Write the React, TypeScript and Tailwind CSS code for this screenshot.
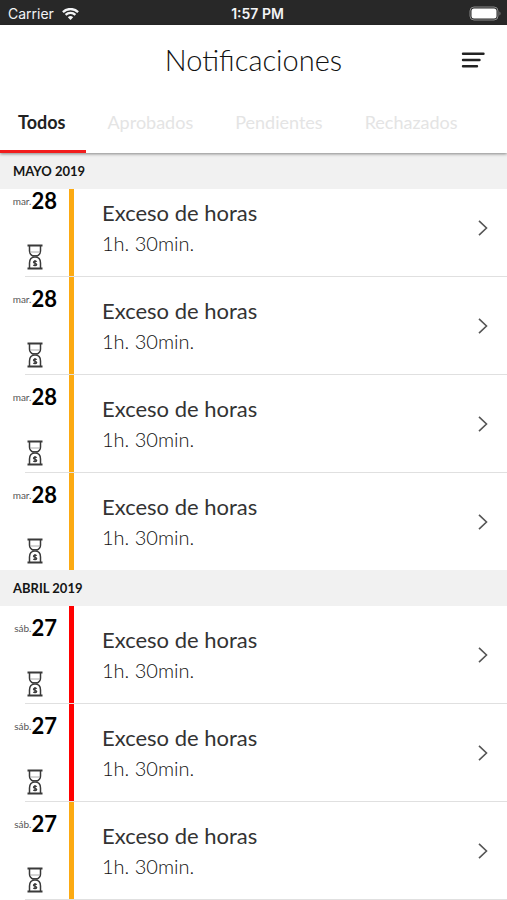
import React from "react";

type Status = "pending" | "rejected";

interface Entry {
  weekday: string;
  day: number;
  status: Status;
}

const tabs = ["Todos", "Aprobados", "Pendientes", "Rechazados"];

const may: Entry[] = [
  { weekday: "mar.", day: 28, status: "pending" },
  { weekday: "mar.", day: 28, status: "pending" },
  { weekday: "mar.", day: 28, status: "pending" },
  { weekday: "mar.", day: 28, status: "pending" },
];

const april: Entry[] = [
  { weekday: "sáb.", day: 27, status: "rejected" },
  { weekday: "sáb.", day: 27, status: "rejected" },
  { weekday: "sáb.", day: 27, status: "pending" },
];

const StatusBar = () => (
  <div className="grid h-[25px] grid-cols-3 items-center bg-[#282828] pt-[2px] pl-2 font-['Inter',sans-serif] text-[14px] text-gray-100">
    <div className="flex items-center gap-2">
      <span>Carrier</span>
      <svg className="h-3 w-[17px]" viewBox="0 0 17 12" fill="currentColor">
        <path d="M8.5 12 5.8 9.2a3.9 3.9 0 0 1 5.4 0Z" />
        <path
          d="M3.6 6.9a7 7 0 0 1 9.800 0M.9 4.100a10.900 10.900 0 0 1 15.200 0"
          fill="none"
          stroke="currentColor"
          strokeWidth="2.3"
        />
      </svg>
    </div>
    <span className="text-center font-semibold">1:57 PM</span>
    <svg
      className="mr-[6px] h-[15px] w-8 justify-self-end"
      viewBox="0 0 32 15"
      fill="none"
    >
      <rect x="1" y="1" width="28" height="13" rx="4" stroke="#8a8a8a" />
      <rect x="2.5" y="2.5" width="25" height="10" rx="2.5" fill="white" />
      <path d="M30.5 5.5v4c1.3-.6 1.3-3.4 0-4Z" fill="#8a8a8a" />
    </svg>
  </div>
);

const Hourglass = () => (
  <svg
    className="h-[26px] w-4"
    viewBox="0 0 16 26"
    fill="none"
    stroke="#3a3a3a"
    strokeWidth="1.5"
  >
    <path d="M.5 1.5h15M.5 24.5h15" strokeWidth="1.8" />
    <path d="M2.5 1.5v5.5c0 2.6 1.5 4.2 4 5.3M13.5 1.5v5.5c0 2.6-1.5 4.2-4 5.3" />
    <path d="M2.5 24.5v-5.500c0-3.700 2-6 5.500-6s5.500 2.300 5.500 6v5.500" />
    <path d="M3 8h10" stroke="#aaa" strokeWidth="1" />
    <path d="M6 11.8h4" />
    <path
      d="M9.8 17.6c-.5-.6-3.3-.8-3.3.6s3.2.9 3.2 2.3-2.7 1.2-3.4.5M8 16.1v6.2"
      strokeWidth="1.3"
    />
  </svg>
);

const Row = ({ weekday, day, status }: Entry) => (
  <li className="bg-white">
    <a href="#detalle" className="flex h-[97px]">
      <div className="flex w-[69px] shrink-0 flex-col justify-between pt-[10px] pb-[6px]">
        <div className="flex items-center justify-end pr-3">
          <span className="text-[10px] leading-6 text-[#555]">{weekday}</span>
          <span className="text-[22px] leading-6 font-bold text-black">
            {day}
          </span>
        </div>
        <div className="flex justify-center">
          <Hourglass />
        </div>
      </div>
      <div
        className={`w-[5px] shrink-0 ${
          status === "rejected" ? "bg-[#ff0000]" : "bg-[#fcaa12]"
        }`}
      />
      <div className="flex grow flex-col pt-[18px] pl-7 leading-[31px]">
        <span className="text-[22px] text-[#333]">Exceso de horas</span>
        <span className="text-[20px] font-light text-[#111]">1h. 30min.</span>
      </div>
      <svg
        className="mr-[19px] h-4 w-[10px] self-center"
        viewBox="0 0 10 16"
        fill="none"
        stroke="#555"
        strokeWidth="1.6"
      >
        <path d="m1 .8 7.500 7.200L1 15.200" />
      </svg>
    </a>
    <hr className="ml-[25px] border-[#e0e0e0]" />
  </li>
);

const MonthHeader = ({ title }: { title: string }) => (
  <h2 className="relative z-10 flex h-9 items-center bg-[#f1f1f1] pt-[2px] pl-[13px] text-[13px] font-bold text-[#151515]">
    {title}
  </h2>
);

const App = () => {
  return (
    <div className="min-h-screen overflow-hidden bg-white font-['Lato',sans-serif]">
      <StatusBar />

      <header className="relative z-20 bg-white shadow-[0_1px_3px_rgba(0,0,0,0.45)]">
        <div className="grid h-[70px] grid-cols-[1fr_auto_1fr] items-center">
          <h1 className="col-start-2 text-[29px] font-light text-[#111]">
            Notificaciones
          </h1>
          <button
            type="button"
            aria-label="Filtrar"
            className="mr-[22px] justify-self-end"
          >
            <svg
              className="h-4 w-6"
              viewBox="0 0 24 16"
              stroke="#222"
              strokeWidth="2.4"
              strokeLinecap="round"
            >
              <path d="M2 1.700h20.500M2 8h16.500M2 14.200h14" />
            </svg>
          </button>
        </div>
        <nav className="flex h-[58px] text-[18px]">
          {tabs.map((tab, i) => (
            <button
              key={tab}
              type="button"
              className={
                i === 0
                  ? "border-b-[3px] border-[#f21d1d] pr-[21px] pl-[18px] font-bold text-[#222]"
                  : "border-b-[3px] border-transparent px-[21px] text-[#e4e4e4]"
              }
            >
              {tab}
            </button>
          ))}
        </nav>
      </header>

      <main>
        <section>
          <MonthHeader title="MAYO 2019" />
          {/* first row is partly scrolled under the month header */}
          <ul className="-mt-[10px] [&>li:last-child>hr]:hidden">
            {may.map((entry, i) => (
              <Row key={i} {...entry} />
            ))}
          </ul>
        </section>
        <section>
          <MonthHeader title="ABRIL 2019" />
          <ul>
            {april.map((entry, i) => (
              <Row key={i} {...entry} />
            ))}
          </ul>
        </section>
      </main>
    </div>
  );
};

export default App;
